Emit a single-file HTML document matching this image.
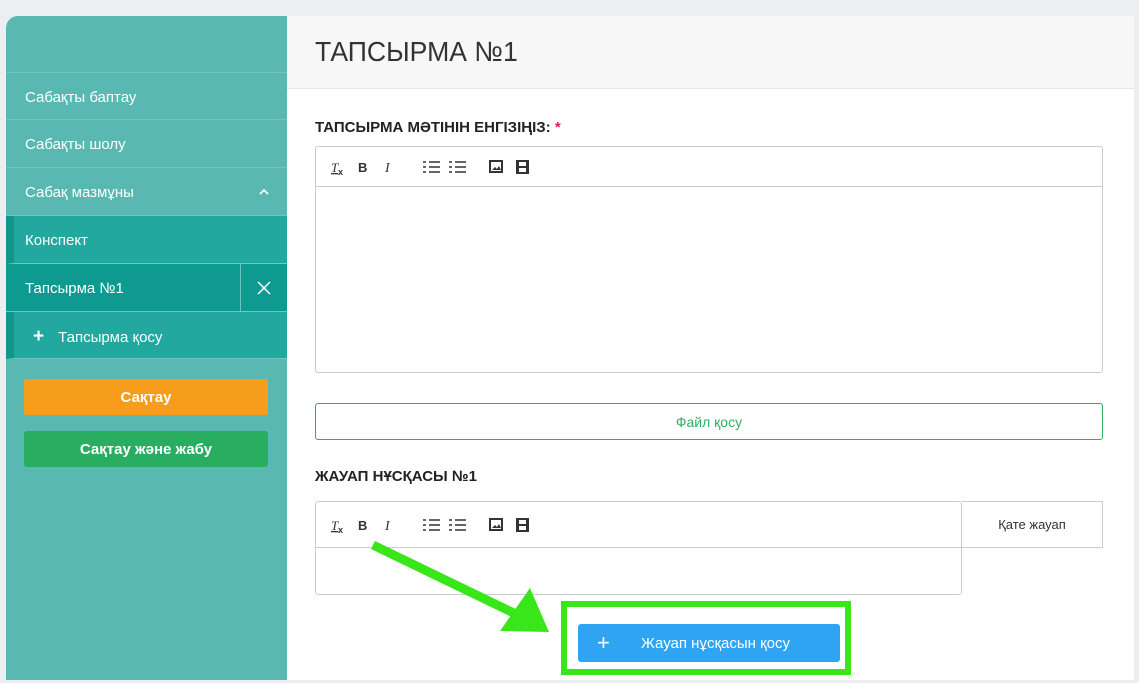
<!DOCTYPE html>
<html><head><meta charset="utf-8"><style>
*{box-sizing:border-box;margin:0;padding:0}
body{width:1139px;height:683px;background:#eceef1;font-family:"Liberation Sans",sans-serif;position:relative;overflow:hidden}
.abs{position:absolute}
svg{display:block}
.side{left:6px;top:16px;width:281px;height:664px;background:#59b9b2;border-top-left-radius:12px}
.item{position:absolute;left:0;width:281px;height:48px;color:#fff;font-size:15px;line-height:49px;padding-left:19px;border-bottom:1px solid #72c6c0}
.main{left:287px;top:16px;width:847px;height:664px;background:#fff}
.hdr{left:0;top:0;width:847px;height:73px;background:#f7f7f7;border-bottom:1px solid #e6e6e6}
</style></head><body>
<div class="abs side">
  <div class="item" style="top:56px;border-top:1px solid #72c6c0">Сабақты баптау</div>
  <div class="item" style="top:104px">Сабақты шолу</div>
  <div class="item" style="top:152px">Сабақ мазмұны<svg style="position:absolute;right:18px;top:20px" width="10" height="7"><path d="M1 6L5 2L9 6" stroke="#fff" stroke-width="1.6" fill="none"/></svg></div>
  <div class="item" style="top:200px;background:#22a89f;border-left:8px solid #12968c;padding-left:11px">Конспект</div>
  <div class="item" style="top:248px;background:#0f9a91;">Тапсырма №1<div style="position:absolute;left:234px;top:0;width:1px;height:47px;background:#6cc5bd"></div><svg style="position:absolute;left:251px;top:17px" width="14" height="14"><path d="M1 1L13 13M13 1L1 13" stroke="#fff" stroke-width="1.5"/></svg></div>
  <div class="item" style="top:296px;background:#22a89f;border-left:8px solid #12968c;padding-left:19px;height:47px"><b style="font-size:19px;margin-right:14px">+</b>Тапсырма қосу</div>
  <div class="abs" style="left:18px;top:363px;width:244px;height:36px;background:#f79d1c;border-radius:3px;color:#fff;font-size:15px;font-weight:bold;text-align:center;line-height:38px">Сақтау</div>
  <div class="abs" style="left:18px;top:415px;width:244px;height:36px;background:#28ad61;border-radius:3px;color:#fff;font-size:15px;font-weight:bold;text-align:center;line-height:38px">Сақтау және жабу</div>
</div>
<div class="abs main">
  <div class="abs hdr"><div style="position:absolute;left:28px;top:20px;font-size:28px;color:#333;transform:scaleX(0.95);transform-origin:left">ТАПСЫРМА №1</div></div>
  <div class="abs" style="left:28px;top:103px;font-size:15px;font-weight:bold;color:#222">ТАПСЫРМА МӘТІНІН ЕНГІЗІҢІЗ: <span style="color:#e8185a">*</span></div>
  <div class="abs" style="left:28px;top:130px;width:788px;height:227px;border:1px solid #ccc;border-radius:3px">
    <svg width="220" height="39"><g fill="#333" stroke="#333">
      <text x="15" y="25" font-size="13" font-style="italic" font-family="Liberation Serif" stroke="none" text-decoration="underline">T</text><text x="22" y="28" font-size="9" font-weight="bold" stroke="none">x</text>
      <text x="42" y="25" font-size="13" font-weight="bold" stroke="none">B</text>
      <text x="69" y="25" font-size="14" font-style="italic" font-family="Liberation Serif" stroke="none">I</text>
      <path d="M113 15h11M113 20h11M113 25h11M139 15h11M139 20h11M139 25h11" stroke-width="1.6"/>
      <path d="M107 15h3M107 20h3M107 25h3M133 15h3M133 20h3M133 25h3" stroke-width="1.6"/>
      <rect x="174" y="14" width="12" height="11" fill="none" stroke-width="2"/><path d="M176 23l3-3 2 2 2-3 2 4z" stroke="none"/>
      <rect x="200" y="13" width="13" height="14" stroke="none"/><rect x="203" y="15" width="7" height="4" fill="#fff" stroke="none"/><rect x="203" y="21" width="7" height="4" fill="#fff" stroke="none"/>
    </g></svg>
    <div style="border-top:1px solid #ccc"></div>
  </div>
  <div class="abs" style="left:28px;top:387px;width:788px;height:37px;border:1px solid #2fae5f;border-radius:3px;color:#2fae5f;font-size:14px;text-align:center;line-height:37px">Файл қосу</div>
  <div class="abs" style="left:28px;top:452px;font-size:15px;font-weight:bold;color:#222">ЖАУАП НҰСҚАСЫ №1</div>
  <div class="abs" style="left:28px;top:485px;width:647px;height:94px;border:1px solid #ccc;border-radius:3px">
    <svg width="220" height="45"><g fill="#333" stroke="#333" transform="translate(0,3)">
      <text x="15" y="25" font-size="13" font-style="italic" font-family="Liberation Serif" stroke="none" text-decoration="underline">T</text><text x="22" y="28" font-size="9" font-weight="bold" stroke="none">x</text>
      <text x="42" y="25" font-size="13" font-weight="bold" stroke="none">B</text>
      <text x="69" y="25" font-size="14" font-style="italic" font-family="Liberation Serif" stroke="none">I</text>
      <path d="M113 15h11M113 20h11M113 25h11M139 15h11M139 20h11M139 25h11" stroke-width="1.6"/>
      <path d="M107 15h3M107 20h3M107 25h3M133 15h3M133 20h3M133 25h3" stroke-width="1.6"/>
      <rect x="174" y="14" width="12" height="11" fill="none" stroke-width="2"/><path d="M176 23l3-3 2 2 2-3 2 4z" stroke="none"/>
      <rect x="200" y="13" width="13" height="14" stroke="none"/><rect x="203" y="15" width="7" height="4" fill="#fff" stroke="none"/><rect x="203" y="21" width="7" height="4" fill="#fff" stroke="none"/>
    </g></svg>
    <div style="border-top:1px solid #ccc"></div>
  </div>
  <div class="abs" style="left:675px;top:485px;width:141px;height:47px;border:1px solid #ccc;border-left:none;font-size:13px;color:#333;text-align:center;line-height:46px">Қате жауап</div>
  <div class="abs" style="left:274px;top:585px;width:290px;height:74px;border:6px solid #39e619"></div>
  <div class="abs" style="left:291px;top:608px;width:262px;height:38px;background:#2ea4f3;border-radius:3px;color:#fff;font-size:15px;line-height:40px"><span style="position:absolute;left:19px;font-size:22px;line-height:38px">+</span><span style="position:absolute;left:63px">Жауап нұсқасын қосу</span></div>
</div>
<svg class="abs" style="left:0;top:0" width="1139" height="683"><path d="M373 545L522 617" stroke="#39e619" stroke-width="9"/><polygon points="500,631 549,632 530,588" fill="#39e619"/></svg>
</body></html>
